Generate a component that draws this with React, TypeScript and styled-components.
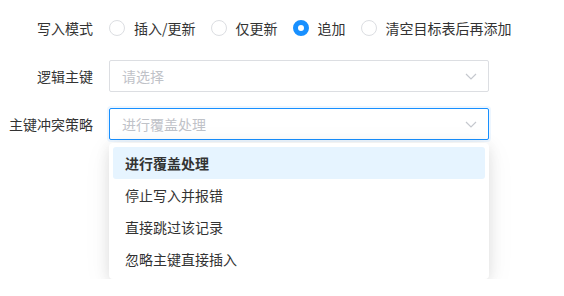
import React from "react";
import styled, { createGlobalStyle } from "styled-components";

const GlobalStyle = createGlobalStyle`
  body {
    margin: 0;
    background: #ffffff;
    font-family: "Noto Sans CJK SC", "Noto Sans", sans-serif;
    font-size: 14px;
    color: #333333;
  }
`;

const modes = ["插入/更新", "仅更新", "追加", "清空目标表后再添加"];
const strategies = ["进行覆盖处理", "停止写入并报错", "直接跳过该记录", "忽略主键直接插入"];

const Chevron: React.FC = () => (
  <Arrow width="12" height="7" viewBox="0 0 12 7">
    <polyline points="1,1 6,6 11,1" fill="none" stroke="#c5c8ce" strokeWidth="1.2" />
  </Arrow>
);

const App: React.FC = () => {
  return (
    <Form>
      <GlobalStyle />
      <Row>
        <Label>写入模式</Label>
        <RadioGroup>
          {modes.map((m) => (
            <RadioItem key={m}>
              <Circle $checked={m === "追加"} />
              <span>{m}</span>
            </RadioItem>
          ))}
        </RadioGroup>
      </Row>
      <Row>
        <Label>逻辑主键</Label>
        <Select>
          <Placeholder>请选择</Placeholder>
          <Chevron />
        </Select>
      </Row>
      <Row>
        <Label>主键冲突策略</Label>
        <SelectWrap>
          <Select $focused>
            <Placeholder>进行覆盖处理</Placeholder>
            <Chevron />
          </Select>
          <Dropdown>
            {strategies.map((s, i) => (
              <Option key={s} $selected={i === 0}>
                {s}
              </Option>
            ))}
          </Dropdown>
        </SelectWrap>
      </Row>
    </Form>
  );
};

export default App;

const Form = styled.div`
  display: flex;
  flex-direction: column;
  gap: 16px;
  padding-top: 12px;
  width: 564px;
`;

const Row = styled.div`
  display: flex;
  align-items: flex-start;
  min-height: 32px;
`;

const Label = styled.div`
  width: 93px;
  height: 32px;
  line-height: 32px;
  padding-right: 16px;
  text-align: right;
  color: #333333;
  white-space: nowrap;
`;

const RadioGroup = styled.div`
  display: flex;
  align-items: center;
  height: 32px;
  gap: 15px;
`;

const RadioItem = styled.label`
  display: flex;
  align-items: center;
  gap: 9px;
  color: #333333;
`;

const Circle = styled.span<{ $checked?: boolean }>`
  box-sizing: border-box;
  width: 16px;
  height: 16px;
  border-radius: 50%;
  background: #ffffff;
  border: ${(p) => (p.$checked ? "5px solid #1890ff" : "1px solid #dcdee2")};
`;

const SelectWrap = styled.div`
  display: flex;
  flex-direction: column;
  gap: 3px;
`;

const Select = styled.div<{ $focused?: boolean }>`
  box-sizing: border-box;
  width: 380px;
  height: 32px;
  display: flex;
  align-items: center;
  justify-content: space-between;
  padding: 0 11px 0 12px;
  border: 1px solid ${(p) => (p.$focused ? "#1890ff" : "#dcdee2")};
  border-radius: 2px;
  background: #ffffff;
  box-shadow: ${(p) => (p.$focused ? "0 0 0 2px rgba(24, 144, 255, 0.08)" : "none")};
`;

const Placeholder = styled.span`
  color: #bfc2c8;
`;

const Arrow = styled.svg`
  display: block;
`;

const Dropdown = styled.div`
  box-sizing: border-box;
  width: 380px;
  padding: 4px;
  background: #ffffff;
  border-radius: 4px;
  box-shadow: 0 3px 14px rgba(0, 0, 0, 0.1), 0 6px 30px rgba(0, 0, 0, 0.06);
`;

const Option = styled.div<{ $selected?: boolean }>`
  height: 32px;
  display: flex;
  align-items: center;
  padding: 0 12px;
  border-radius: 3px;
  color: #333333;
  font-weight: ${(p) => (p.$selected ? 700 : 400)};
  background: ${(p) => (p.$selected ? "#e6f4ff" : "transparent")};
`;
